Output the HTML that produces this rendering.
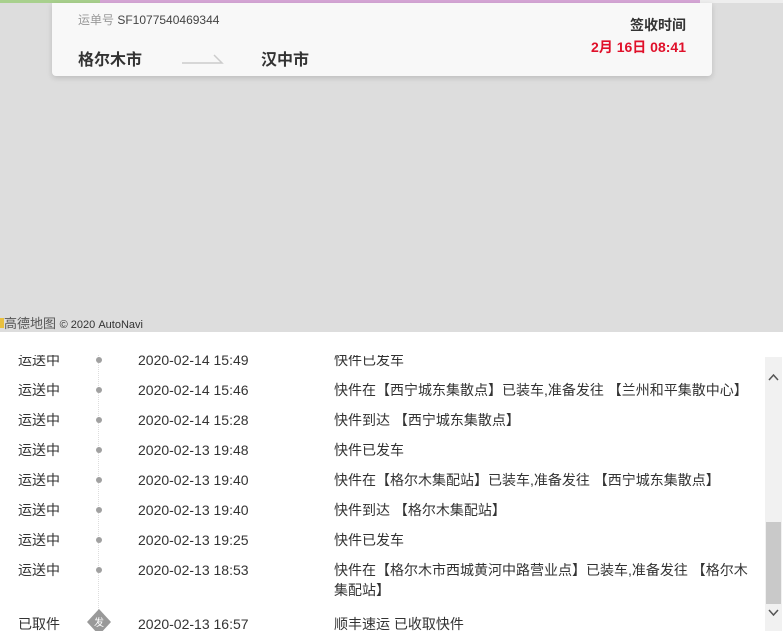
<!DOCTYPE html>
<html><head><meta charset="utf-8"><style>
*{margin:0;padding:0;box-sizing:border-box}
body{width:783px;height:631px;overflow:hidden;position:relative;background:#fff;font-family:"Liberation Sans","Noto Sans CJK SC",sans-serif;color:#333}
.map{position:absolute;left:0;top:0;width:783px;height:332px;background:#dddddd}
.strip{position:absolute;top:0;height:3px}
.card{position:absolute;left:52px;top:3px;width:660px;height:73px;background:#f8f8f8;border-radius:0 0 4px 4px;box-shadow:0 2px 6px rgba(0,0,0,.15)}
.abs{position:absolute;white-space:nowrap}
.list{position:absolute;left:0;top:355px;width:765px;height:276px;overflow:hidden}
.row{position:absolute;left:0;width:760px;font-size:14px;line-height:20px}
.dot{position:absolute;left:96px;width:6px;height:6px;border-radius:50%;background:#a0a0a0}
.line{position:absolute;left:98px;top:0;height:281px;border-left:1px dotted #ddd}
.sb{position:absolute;left:765px;top:357px;width:17px;height:274px;background:#f1f1f1}
</style></head><body>
<div class="map">
<div class="strip" style="left:0;width:100px;background:#a8d08d"></div>
<div class="strip" style="left:100px;width:600px;background:#d5a6d6"></div>
<div class="strip" style="left:700px;width:83px;background:#eee"></div>
<div class="card">
<div class="abs" style="left:26px;top:8px;font-size:12px;color:#999">运单号 <span style="color:#444">SF1077540469344</span></div>
<div class="abs" style="left:26px;top:43px;font-size:16px;font-weight:bold;color:#333">格尔木市</div>
<svg class="abs" style="left:130px;top:50px" width="42" height="12"><path d="M0 10 H40 L32 2" fill="none" stroke="#ccc" stroke-width="1.5"/></svg>
<div class="abs" style="left:209px;top:43px;font-size:16px;font-weight:bold;color:#333">汉中市</div>
<div class="abs" style="right:26px;top:12px;font-size:14px;font-weight:bold;color:#333">签收时间</div>
<div class="abs" style="right:26px;top:34px;font-size:14px;font-weight:bold;color:#e0102a">2月 16日 08:41</div>
</div>
<div class="abs" style="left:0;top:313px;font-size:13px;color:#555"><span style="display:inline-block;width:4px;height:10px;background:#e8c040"></span>高德地图 <span style="font-size:11px;color:#333">© 2020 AutoNavi</span></div>
</div>
<div class="list">
<div class="line"></div>
<div class="row" style="top:-5px"><span class="abs" style="left:18px">运送中</span><span class="dot" style="top:7px"></span><span class="abs" style="left:138px">2020-02-14 15:49</span><span class="abs" style="left:334px">快件已发车</span></div>
<div class="row" style="top:25px"><span class="abs" style="left:18px">运送中</span><span class="dot" style="top:7px"></span><span class="abs" style="left:138px">2020-02-14 15:46</span><span class="abs" style="left:334px">快件在【西宁城东集散点】已装车,准备发往 【兰州和平集散中心】</span></div>
<div class="row" style="top:55px"><span class="abs" style="left:18px">运送中</span><span class="dot" style="top:7px"></span><span class="abs" style="left:138px">2020-02-14 15:28</span><span class="abs" style="left:334px">快件到达 【西宁城东集散点】</span></div>
<div class="row" style="top:85px"><span class="abs" style="left:18px">运送中</span><span class="dot" style="top:7px"></span><span class="abs" style="left:138px">2020-02-13 19:48</span><span class="abs" style="left:334px">快件已发车</span></div>
<div class="row" style="top:115px"><span class="abs" style="left:18px">运送中</span><span class="dot" style="top:7px"></span><span class="abs" style="left:138px">2020-02-13 19:40</span><span class="abs" style="left:334px">快件在【格尔木集配站】已装车,准备发往 【西宁城东集散点】</span></div>
<div class="row" style="top:145px"><span class="abs" style="left:18px">运送中</span><span class="dot" style="top:7px"></span><span class="abs" style="left:138px">2020-02-13 19:40</span><span class="abs" style="left:334px">快件到达 【格尔木集配站】</span></div>
<div class="row" style="top:175px"><span class="abs" style="left:18px">运送中</span><span class="dot" style="top:7px"></span><span class="abs" style="left:138px">2020-02-13 19:25</span><span class="abs" style="left:334px">快件已发车</span></div>
<div class="row" style="top:205px"><span class="abs" style="left:18px">运送中</span><span class="dot" style="top:7px"></span><span class="abs" style="left:138px">2020-02-13 18:53</span><span class="abs" style="left:334px">快件在【格尔木市西城黄河中路营业点】已装车,准备发往 【格尔木</span><span class="abs" style="left:334px;top:20px">集配站】</span></div>
<div class="row" style="top:259px"><span class="abs" style="left:18px">已取件</span>
<svg class="abs" style="left:86px;top:-6px" width="26" height="28"><path d="M13 1 L25 14 L13 27 L1 14 Z" fill="#999"/><text x="13" y="18" font-size="10" fill="#fff" text-anchor="middle" font-family="Noto Sans CJK SC">发</text></svg>
<span class="abs" style="left:138px">2020-02-13 16:57</span><span class="abs" style="left:334px">顺丰速运 已收取快件</span></div>
</div>
<div class="sb">
<svg class="abs" style="left:3px;top:16px" width="11" height="8"><path d="M1 7 L5.5 2 L10 7" fill="none" stroke="#555" stroke-width="1.5"/></svg>
<div class="abs" style="left:1px;top:165px;width:15px;height:82px;background:#c9c9c9"></div>
<svg class="abs" style="left:3px;top:252px" width="11" height="8"><path d="M1 1 L5.5 6 L10 1" fill="none" stroke="#555" stroke-width="1.5"/></svg>
</div>
</body></html>
